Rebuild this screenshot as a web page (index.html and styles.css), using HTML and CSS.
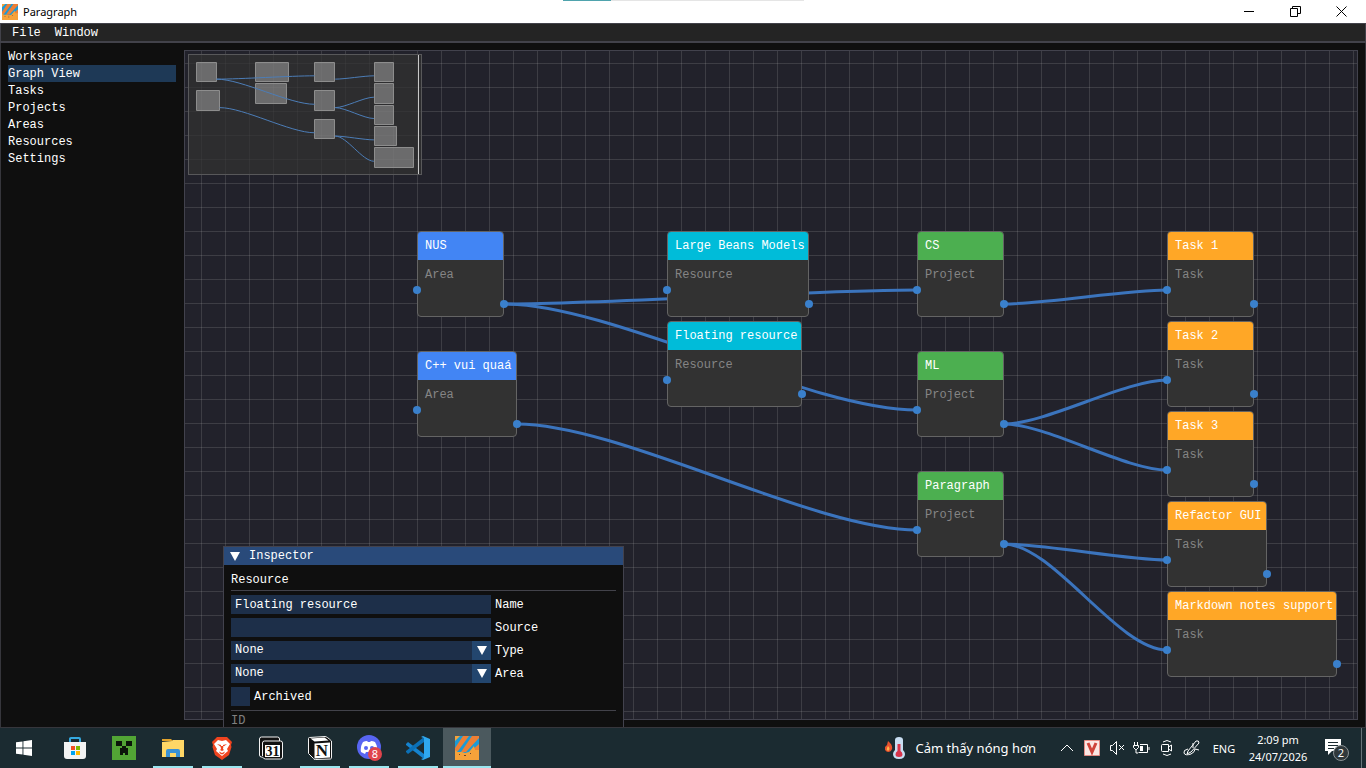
FILE: index.html
```html
<!DOCTYPE html>
<html lang="en">
<head>
<meta charset="utf-8">
<title>Paragraph</title>
<link rel="stylesheet" href="styles.css">
</head>
<body>
<svg class="defs" aria-hidden="true">
  <symbol id="app-logo" viewBox="0 0 24 24">
    <path fill="#1c9ad6" d="M0 0h24v24H0z"/>
    <path fill="#f6a23a" d="M0 0h5L0 5z"/>
    <path fill="#ee7f35" d="M8 0h6L3 15H0v-3zM17 0h7v2L11 16H6z"/>
    <path fill="#ee7f35" d="M24 8v7h-8z"/>
    <path fill="#f6a23a" d="M0 24V14l3 2h4l3 1 4-1 5-6 1 4h4v10z"/>
    <path fill="#6b4428" d="M4 18h1v1H4zM15 17h1v1h-1zM9 19h2v1H9z"/>
  </symbol>
</svg>
<div class="desktop">
  <header class="titlebar">
    <svg class="title-icon"><use href="#app-logo"/></svg>
    <span class="title-text">Paragraph</span>
    <div class="progress"><span></span></div>
    <div class="window-buttons">
      <button type="button" aria-label="Minimize"><svg width="11" height="11" viewBox="0 0 11 11"><path d="M0 5.500h10"/></svg></button>
      <button type="button" aria-label="Restore"><svg width="11" height="11" viewBox="0 0 11 11"><path d="M.5 2.500h7v8h-7zM2.500 2.500v-2h8v7h-3"/></svg></button>
      <button type="button" aria-label="Close"><svg width="11" height="11" viewBox="0 0 11 11"><path d="M.5.5l10 10M10.500.5l-10 10"/></svg></button>
    </div>
  </header>

  <nav class="menubar">
    <button type="button">File</button>
    <button type="button">Window</button>
  </nav>

  <main class="app">
    <nav class="sidebar">
      <h1>Workspace</h1>
      <a href="#graph" class="selected">Graph View</a>
      <a href="#tasks">Tasks</a>
      <a href="#projects">Projects</a>
      <a href="#areas">Areas</a>
      <a href="#resources">Resources</a>
      <a href="#settings">Settings</a>
    </nav>

    <section class="canvas" id="graph">
      <svg class="links">
        <g id="links" transform="translate(-185 -51)">
          <g id="curves">
            <path d="M504 304C607 304 814 290 917 290"/>
            <path d="M504 304C611 304 810 410 917 410"/>
            <path d="M517 424C620 424 814 530 917 530"/>
            <path d="M1004 304C1045 304 1126 290 1167 290"/>
            <path d="M1004 424C1046 424 1125 380 1167 380"/>
            <path d="M1004 424C1046 424 1125 470 1167 470"/>
            <path d="M1004 544C1045 544 1126 560 1167 560"/>
            <path d="M1004 544C1053 544 1118 650 1167 650"/>
          </g>
        </g>
      </svg>

      <article class="node area" style="left:232px;top:180px;width:87px"><h2>NUS</h2><p>Area</p></article>
      <article class="node area" style="left:232px;top:300px;width:100px"><h2>C++ vui quaá</h2><p>Area</p></article>
      <article class="node resource" style="left:482px;top:180px;width:142px"><h2>Large Beans Models</h2><p>Resource</p></article>
      <article class="node resource" style="left:482px;top:270px;width:135px"><h2>Floating resource</h2><p>Resource</p></article>
      <article class="node project" style="left:732px;top:180px;width:87px"><h2>CS</h2><p>Project</p></article>
      <article class="node project" style="left:732px;top:300px;width:87px"><h2>ML</h2><p>Project</p></article>
      <article class="node project" style="left:732px;top:420px;width:87px"><h2>Paragraph</h2><p>Project</p></article>
      <article class="node task" style="left:982px;top:180px;width:87px"><h2>Task 1</h2><p>Task</p></article>
      <article class="node task" style="left:982px;top:270px;width:87px"><h2>Task 2</h2><p>Task</p></article>
      <article class="node task" style="left:982px;top:360px;width:87px"><h2>Task 3</h2><p>Task</p></article>
      <article class="node task" style="left:982px;top:450px;width:100px"><h2>Refactor GUI</h2><p>Task</p></article>
      <article class="node task" style="left:982px;top:540px;width:170px"><h2>Markdown notes support</h2><p>Task</p></article>

      <div class="minimap">
        <svg width="232" height="119">
          <g transform="translate(-189 -55)">
            <g class="mini-nodes">
              <path d="M196.500 62.500h20v19h-20zM196.500 90.500h23v20h-23zM255.500 62.500h33v19h-33zM255.500 83.500h31v20h-31zM314.500 62.500h20v19h-20zM314.500 90.500h20v20h-20zM314.500 119.500h20v19h-20zM374.500 62.500h19v19h-19zM374.500 83.500h19v20h-19zM374.500 105.500h19v19h-19zM374.500 126.500h22v19h-22zM374.500 147.500h39v20h-39z"/>
            </g>
            <use class="mini-links" href="#curves" transform="translate(97 7) scale(.2373)"/>
            <path class="mini-view" d="M418.500 54v120"/>
          </g>
        </svg>
      </div>
    </section>

    <form class="inspector">
      <h2><svg width="10" height="9" viewBox="0 0 10 9"><path fill="#fff" d="M0 0h10L5 9z"/></svg>Inspector</h2>
      <div class="inspector-body">
        <p>Resource</p>
        <hr>
        <div class="field"><input id="name" type="text" value="Floating resource"><label for="name">Name</label></div>
        <div class="field"><input id="source" type="text"><label for="source">Source</label></div>
        <div class="field"><span class="combo"><select id="type"><option>None</option></select></span><label for="type">Type</label></div>
        <div class="field"><span class="combo"><select id="area"><option>None</option></select></span><label for="area">Area</label></div>
        <div class="field"><input id="archived" type="checkbox"><label for="archived">Archived</label></div>
        <hr>
        <p class="muted">ID</p>
      </div>
    </form>
  </main>

  <footer class="taskbar">
    <button type="button" class="start" aria-label="Start"><svg width="16" height="16" viewBox="0 0 16 16"><path fill="#fff" d="M0 2.300L6.500 1.400v6.200H0zM7.400 1.300L16 0v7.600H7.400zM0 8.400h6.500v6.200L0 13.700zM7.400 8.400H16V16l-8.600-1.300z"/></svg></button>
    <div class="apps">
      <button type="button" aria-label="Store"><svg width="24" height="24" viewBox="0 0 24 24"><path fill="none" stroke="#35a9e0" stroke-width="2" d="M7 7V2.500Q7 2 8 2h8q1 0 1 1v4"/><path fill="#f3f3f3" d="M1 6h22v14q0 3-3 3H4q-3 0-3-3z"/><path fill="#f25022" d="M8 10h4v4H8z"/><path fill="#7fba00" d="M13 10h4v4h-4z"/><path fill="#00a4ef" d="M8 15h4v4H8z"/><path fill="#ffb900" d="M13 15h4v4h-4z"/></svg></button>
      <button type="button" aria-label="Minecraft"><svg width="24" height="24" viewBox="0 0 24 24"><path fill="#52a535" d="M0 0h24v24H0z"/><path fill="#0b160a" d="M4 5h6v5H4zM14 5h6v5h-6zM10 10h4v2h2v7h-3v-2h-2v2H8v-7h2z"/></svg></button>
      <button type="button" class="open" aria-label="File Explorer"><svg width="24" height="24" viewBox="0 0 24 24"><path fill="#e2a32c" d="M1 3h9l2 2H1z"/><path fill="#ffd766" d="M1 6l10-1 1-1h11v17H1z"/><path fill="#3a91d4" d="M5 21v-6q0-2 2-2h10q2 0 2 2v6h-4v-4H9v4z"/></svg></button>
      <button type="button" class="open" aria-label="Brave"><svg width="24" height="24" viewBox="0 0 24 24"><path fill="#f0441f" d="M7 1h10l3 3 2 2-1 3 .5 2L19 19l-7 5-7-5L2.500 11 3 9 2 6l2-2z"/><path fill="#fff" d="M8 4l4 1 4-1 4 4-3 5 1 2-6 5-6-5 1-2-3-5z"/><path fill="#f0441f" d="M7 8l4 1v2zM17 8l-4 1v2zM10.500 10h3l-.5 3 1 1-2 1-2-1 1-1zM9 15.500l3 1.500 3-1.500-1 2-2 1-2-1z"/></svg></button>
      <button type="button" aria-label="Notion Calendar"><svg width="24" height="24" viewBox="0 0 24 24"><path fill="#111" stroke="#f2f2f2" d="M.5 3q0-2 2-2h16q2 0 2 2v2h1q2 0 2 2v14q0 2-2 2h-15q-2 0-3-2h-1q-2 0-2-2z"/><path fill="none" stroke="#f2f2f2" d="M3.500 20V7q0-2 2-2h15"/><path fill="#fff" d="M6 9h15v12H6z"/><text x="13.500" y="20" class="glyph" font-size="14">31</text></svg></button>
      <button type="button" class="open" aria-label="Notion"><svg width="24" height="24" viewBox="0 0 24 24"><path fill="#111" stroke="#f2f2f2" d="M.5 2.500q0-1 1-1L17 .5q2 0 6.500 4.500v16q0 2-1 2l-15 .5q-2 0-2-1l-5-5z"/><path fill="#fff" d="M2.500 2.500l14-1 4 3-14 1zM6.500 7.500L22 6.500v15l-15.500 1z"/><text x="14" y="20" class="glyph" font-size="17">N</text></svg></button>
      <button type="button" class="open" aria-label="Discord"><svg width="26" height="26" viewBox="0 0 26 26"><circle cx="13" cy="12" r="12" fill="#5865f2"/><path fill="#fff" d="M7 7q2-1 4-1l1 1h2l1-1q2 0 4 1 3 5 2 10l-4 2-1-2h-6l-1 2-4-2Q4 12 7 7z"/><ellipse cx="10" cy="13" rx="2" ry="2" fill="#5865f2"/><ellipse cx="16" cy="13" rx="2" ry="2" fill="#5865f2"/><circle cx="19" cy="19" r="7" fill="#e0444c"/><text x="19" y="23" class="count">8</text></svg></button>
      <button type="button" class="open" aria-label="Visual Studio Code"><svg width="24" height="24" viewBox="0 0 24 24"><path fill="#1583cf" d="M0 8l2-2L18 18v5L0 9z"/><path fill="#0b70b7" d="M0 16l2 2L18 6V1L0 15z"/><path fill="#2fa8f0" d="M17 0l7 3v18l-7 3-2-1 3-1V2l-3-1z"/></svg></button>
      <button type="button" class="open active" aria-label="Paragraph"><svg width="24" height="24"><use href="#app-logo"/></svg></button>
    </div>
    <div class="tray">
      <button type="button" class="weather"><svg width="22" height="24" viewBox="0 0 22 24"><path fill="#e9522d" d="M3 5q5 4 4 8-1 3-4 3-4-1-3-5 1-1 2-2z"/><path fill="#ffb449" d="M3 10q3 3 0 5-2-1-1-3z"/><path fill="#c9def2" d="M10 4q0-3 4-3t4 3v10q2 2 2 4 0 5-6 5t-6-5q0-2 2-4z"/><path fill="#d8334a" d="M12.500 8h3v7q2 1 2 3.500 0 2.500-3.500 2.500t-3.500-2.500q0-2.500 2-3.500z"/></svg>Cảm thấy nóng hơn</button>
      <button type="button" class="chevron" aria-label="Show hidden icons"><svg width="14" height="8" viewBox="0 0 14 8"><path class="line" d="M1 7l6-6 6 6"/></svg></button>
      <button type="button" aria-label="Input method"><svg width="16" height="16" viewBox="0 0 16 16"><path fill="#fbe6e3" stroke="#e58b84" d="M.5.5h15v15H.5z"/><path fill="none" stroke="#cf433a" stroke-width="3" d="M4 3l4 9 4-9"/></svg></button>
      <button type="button" aria-label="Volume muted"><svg width="16" height="16" viewBox="0 0 16 16"><path class="line" d="M1.500 5.500h2l4-4v13l-4-4h-2zM10 5l5 5M15 5l-5 5"/></svg></button>
      <button type="button" aria-label="Battery"><svg width="17" height="14" viewBox="0 0 17 14"><path class="line" d="M7 3.500h7.500v8H5.500M16 6v3M1.500 1v3M4.500 1v3M.5 4.500h5v2l-2 2h-1l-2-2zM3 8v4h2"/><path fill="#fff" d="M7 5h3v5H7z"/></svg></button>
      <button type="button" aria-label="Meet now"><svg width="14" height="18" viewBox="0 0 14 18"><path class="line" d="M2.500 5.500h6v7h-6q-1 0-1-1v-5q0-1 1-1zM8.500 8l3-2v6l-3-2M3 3q4-3 8 0M3 15q4 3 8 0"/></svg></button>
      <button type="button" aria-label="Pen"><svg width="18" height="18" viewBox="0 0 18 18"><path class="line" d="M5 12L13 2q3-1 3 2L8 13l-4 2zM10 4v5M5 10q-5 1-4 4 1 3 7 1 4-2 4-5l4 1"/></svg></button>
      <button type="button" class="lang">ENG</button>
      <button type="button" class="clock"><time>2:09 pm</time><time>24/07/2026</time></button>
      <button type="button" class="notify" aria-label="Notifications"><svg width="26" height="26" viewBox="0 0 26 26"><path fill="#fff" d="M1 4h16v12H8l-4 4v-4H1z"/><path stroke="#1b2b31" d="M4 7.500h10M4 10.500h10M4 13.500h6"/><circle cx="17" cy="18" r="7.500" fill="#30383b" stroke="#8a9295"/><text x="17" y="22" class="count">2</text></svg></button>
    </div>
  </footer>
</div>
</body>
</html>
```
FILE: styles.css
```css
* { box-sizing: border-box; margin: 0; }

body {
  background: #0f0f0f;
  color: #fff;
  font: 12px/15px "Liberation Mono", monospace;
}

button, input, select {
  border: 0;
  border-radius: 0;
  padding: 0;
  background: none;
  color: inherit;
  font: inherit;
}

h1, h2 { font: inherit; }
a { color: inherit; text-decoration: none; }
svg { display: block; flex: none; }
.defs { display: none; }

.desktop {
  display: flex;
  flex-direction: column;
  height: 100vh;
  overflow: hidden;
}

/* Title bar */
.titlebar {
  position: relative;
  display: flex;
  align-items: center;
  height: 23px;
  padding-left: 2px;
  gap: 5px;
  background: #fff;
  color: #000;
  font: 11px/16px "Noto Sans", sans-serif;
}
.title-icon { width: 16px; height: 16px; }
.progress {
  position: absolute;
  top: 0;
  left: calc(50% - 120px);
  width: 241px;
  height: 1px;
  background: #e5e5e5;
}
.progress span { display: block; width: 48px; height: 1px; background: #4fa3ad; }
.window-buttons { display: flex; margin-left: auto; padding-right: 2px; }
.window-buttons button { display: grid; place-items: center; width: 46px; height: 20px; }
.window-buttons path { fill: none; stroke: #000; }

/* Menu bar */
.menubar {
  display: flex;
  height: 20px;
  padding: 2px 0 0 11px;
  gap: 14px;
  background: #242424;
  border: 1px solid #42424a;
  border-bottom-width: 2px;
}

/* Application body */
.app {
  position: relative;
  display: flex;
  flex: 1;
  min-height: 0;
  padding: 7px;
  gap: 8px;
  border: 1px solid #36363c;
  border-top: 0;
  overflow: hidden;
}
.sidebar { display: flex; flex-direction: column; width: 168px; }
.sidebar h1, .sidebar a { height: 17px; padding-top: 2px; }
.sidebar h1 { height: 15px; padding-top: 0; }
.sidebar .selected { background: #1e3956; }

/* Graph */
.canvas {
  position: relative;
  flex: 1;
  overflow: hidden;
  border: 1px solid #42424d;
  background-color: #22222b;
  background-image:
    linear-gradient(90deg, rgba(200, 200, 200, .16) 1px, transparent 1px),
    linear-gradient(rgba(200, 200, 200, .16) 1px, transparent 1px);
  background-size: 24px 24px;
  background-position: 16px 12px;
}
.links {
  position: absolute;
  inset: 0;
  width: 100%;
  height: 100%;
  fill: none;
  stroke: #3b74bd;
  stroke-width: 3px;
}
.links path { vector-effect: non-scaling-stroke; }

.node {
  position: absolute;
  height: 86px;
  border: 1px solid #646464;
  border-radius: 4px;
  background: #323232;
  white-space: nowrap;
}
.node h2 { padding: 7px 7px 6px; border-radius: 3px 3px 0 0; }
.node p { padding: 8px 7px; color: #858585; }
.node::before, .node::after {
  content: "";
  position: absolute;
  width: 8px;
  height: 8px;
  border-radius: 50%;
  background: #3a80cc;
}
.node::before { left: -5px; top: 54px; }
.node::after { right: -5px; top: 68px; }
.area h2 { background: #4285f4; }
.resource h2 { background: #00bcd9; }
.project h2 { background: #4caf50; }
.task h2 { background: #ffa726; }

.minimap {
  position: absolute;
  left: 3px;
  top: 3px;
  border: 1px solid #58585a;
  background: rgba(50, 50, 50, .75);
}
.mini-nodes { fill: rgba(200, 200, 200, .4); stroke: #8d8d8d; }
.mini-links { fill: none; stroke: #4c7db7; stroke-width: 1px; }
.mini-view { stroke: #c8c8c8; }

/* Inspector */
.inspector {
  position: absolute;
  left: 222px;
  top: 503px;
  width: 401px;
  height: 240px;
  border: 1px solid #42424d;
  background: #0f0f0f;
}
.inspector h2 {
  display: flex;
  align-items: center;
  height: 18px;
  padding-left: 6px;
  gap: 9px;
  background: #294a7a;
}
.inspector-body { display: flex; flex-direction: column; gap: 4px; padding: 8px 7px; }
.inspector hr { height: 1px; border: 0; background: #42424a; }
.inspector p { height: 13px; }
.field { display: flex; align-items: center; gap: 4px; }
.field label { padding-top: 2px; }
.field input, .combo { width: 260px; height: 19px; background: #1d2f49; }
.field input { padding: 0 4px; }
.combo { position: relative; }
.combo select { width: 100%; height: 19px; padding: 0 4px; appearance: none; }
.combo::before {
  content: "";
  position: absolute;
  right: 0;
  width: 19px;
  height: 19px;
  background: #23466e;
}
.combo::after {
  content: "";
  position: absolute;
  right: 4px;
  top: 5px;
  width: 10px;
  height: 9px;
  background: #fff;
  clip-path: polygon(0 0, 100% 0, 50% 100%);
}
.field input[type="checkbox"] { width: 19px; appearance: none; }
.inspector .muted { color: #808080; line-height: 13px; }

/* Taskbar */
.taskbar {
  display: flex;
  height: 40px;
  background: #1b2b31;
  font: 11px/17px "Noto Sans", sans-serif;
}
.taskbar button { display: flex; align-items: center; justify-content: center; flex: none; }
.start { width: 48px; }
.apps { display: flex; gap: 1px; padding-left: 3px; }
.apps button { position: relative; width: 48px; }
.apps .open::after {
  content: "";
  position: absolute;
  left: 4px;
  right: 4px;
  bottom: 0;
  height: 2px;
  background: #9be6ef;
}
.apps .active { background: #4b595e; }
.apps .active::after { left: 0; right: 0; }
.glyph { font-family: "Liberation Serif", serif; font-weight: bold; text-anchor: middle; fill: #111; }
.count { font: 11px "Noto Sans", sans-serif; text-anchor: middle; fill: #fff; }

.tray { display: flex; margin-left: auto; padding-right: 4px; }
.tray button { width: 25px; }
.tray .line { fill: none; stroke: #fff; }
.tray .weather { width: auto; gap: 9px; margin-right: 18px; font-size: 13px; }
.tray .lang { width: 40px; }
.tray .clock { flex-direction: column; width: 68px; }
.tray .notify { width: 50px; border-right: 1px solid #66757a; }
```
